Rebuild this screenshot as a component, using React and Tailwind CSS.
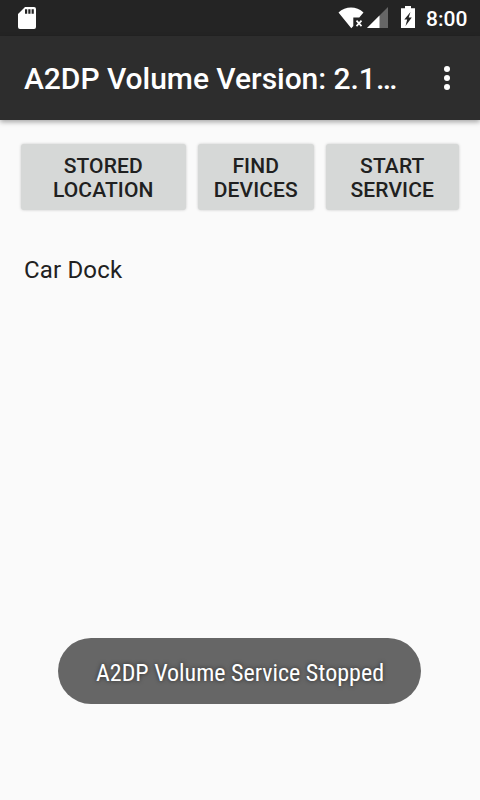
function StatusBar() {
  return (
    <div className="flex h-9 items-center bg-[#242424] text-white">
      <svg className="ml-[18px] h-[22px] w-[18px]" viewBox="0 0 18 22" fill="currentColor">
        <path fillRule="evenodd" d="M7 0h9q2 0 2 2v18q0 2-2 2H2q-2 0-2-2V7ZM7 2.2v4.6h2.2V2.2ZM10.3 2.2v4.6h2.2V2.2ZM13.6 2.2v4.6h2.2V2.2Z" />
      </svg>
      <svg className="ml-auto h-[22px] w-[27px]" viewBox="0 0 27 22" fill="currentColor">
        <path d="M0.5 5.6C4 2.2 8.5.5 13 .5s9 1.7 12.5 5.1L21.3 10.500H15.300v8.500L13.300 21.200Z" />
        <path d="m18.500 13.700 5 5.400m0-5.400-5 5.400" stroke="currentColor" strokeWidth="1.700" />
      </svg>
      <svg className="ml-[2px] h-[22px] w-[21px]" viewBox="0 0 21 22">
        <path d="M21 0V21H0Z" fill="#666" />
        <path d="M12.5 8.5V21H0Z" fill="#fff" />
      </svg>
      <svg className="ml-[13px] h-[22px] w-[14px] -translate-y-px" viewBox="0 0 14 22" fill="currentColor">
        <path fillRule="evenodd" d="M4 0h6v2.3H14v19.7H0V2.3h4ZM9.5 6 3.3 13.5H6.2L4.5 20 10.8 11.5H7.7Z" />
      </svg>
      <span className="ml-[11px] mr-[12px] w-[42px] whitespace-nowrap pt-[2px] text-[21px] leading-9 font-medium">8:00</span>
    </div>
  );
}

function ActionBar() {
  return (
    <header className="flex h-[84px] items-center justify-between bg-[#2d2d2d] pl-6 text-white shadow-[0_2px_5px_rgba(0,0,0,0.35)]">
      <h1 className="whitespace-nowrap text-[30px] leading-[35px] font-medium tracking-[-0.04px]">A2DP Volume Version: 2.1…</h1>
      <svg className="mr-[30px] h-6 w-[6px]" viewBox="0 0 6 24" fill="currentColor">
        <circle cx="3" cy="3" r="3" />
        <circle cx="3" cy="12" r="3" />
        <circle cx="3" cy="21" r="3" />
      </svg>
    </header>
  );
}

function ActionButton({ first, second, width }) {
  return (
    <button className={`${width} h-[66px] rounded-[3px] bg-[#d6d8d7] pt-[2px] pr-[0.5px] text-center text-[21px] leading-6 font-medium tracking-[0.12px] text-[#202020] shadow-[0_0_3px_rgba(0,0,0,0.2)]`}>
      {first}
      <br />
      {second}
    </button>
  );
}

export default function App() {
  return (
    <div className="flex h-[800px] w-[480px] flex-col overflow-hidden bg-[#fafafa] font-['Roboto',sans-serif]">
      <StatusBar />
      <ActionBar />
      <div className="mt-[23.5px] flex gap-3 pl-[21px]">
        <ActionButton first="STORED" second="LOCATION" width="w-[165px]" />
        <ActionButton first="FIND" second="DEVICES" width="w-[116px]" />
        <ActionButton first="START" second="SERVICE" width="w-[133px]" />
      </div>
      <div className="mt-[46.5px] pl-6 text-2xl leading-7 tracking-[0.16px] text-[#212121]">Car Dock</div>
      <div className="mt-auto mb-24 ml-[58px] flex h-[66px] w-[363px] items-center justify-center rounded-full bg-[#666] pt-[3px] pl-px font-['Roboto_Condensed','Roboto',sans-serif] text-2xl [font-stretch:condensed] text-white [text-shadow:0_0_4px_rgba(0,0,0,0.6)]">
        <span className="whitespace-nowrap">A2DP Volume Service Stopped</span>
      </div>
    </div>
  );
}
